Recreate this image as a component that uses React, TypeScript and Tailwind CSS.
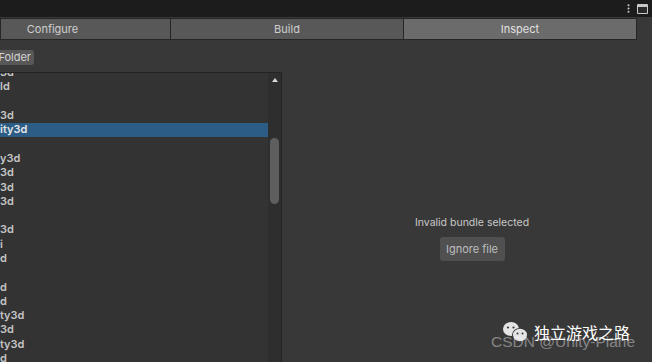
import { MoreVertical } from "lucide-react";

const rows = [
  "3d", "ld", "", "3d", "ity3d", "", "y3d", "3d", "3d", "3d", "", "3d", "i",
  "d", "", "d", "d", "ty3d", "3d", "ty3d", "d",
];
const selected = 4;

function Tab({ label, active, className }: { label: string; active?: boolean; className?: string }) {
  return (
    <div
      className={`flex h-[22px] items-center justify-center border border-[#262626] text-[11px] ${
        active ? "bg-[#6b6b6b] text-[#e0e0e0]" : "bg-[#585858] text-[#cfcfcf]"
      } ${className ?? ""}`}
    >
      {label}
    </div>
  );
}

function WeChatMark() {
  return (
    <svg width="28" height="22" viewBox="0 0 28 22">
      <ellipse cx="9" cy="8" rx="8" ry="7" fill="#e4e4e4" />
      <circle cx="6" cy="6.5" r="1.1" fill="#383838" />
      <circle cx="11.5" cy="6.5" r="1.1" fill="#383838" />
      <ellipse cx="18" cy="14" rx="8" ry="7" fill="#383838" />
      <ellipse cx="18" cy="14" rx="7" ry="6.2" fill="#e4e4e4" />
      <circle cx="15.5" cy="12.5" r="1" fill="#383838" />
      <circle cx="20.5" cy="12.5" r="1" fill="#383838" />
    </svg>
  );
}

export default function App() {
  return (
    <div
      className="relative flex h-[362px] w-[652px] flex-col overflow-hidden bg-[#383838]"
      style={{ fontFamily: "Inter, 'Noto Sans', sans-serif" }}
    >
      {/* title strip */}
      <div className="flex h-[17px] items-center justify-end gap-[3px] bg-[#1c1c1c] pr-[4px]">
        <MoreVertical className="h-[11px] w-[11px] text-[#c8c8c8]" strokeWidth={2.5} />
        <div className="h-[10px] w-[11px] rounded-[1px] border border-t-[3px] border-[#c8c8c8] bg-[#2a2a2a]" />
      </div>

      {/* tabs */}
      <div className="flex pt-px pr-[14px]">
        <Tab label="Configure" className="w-[171px] pr-[66px]" />
        <Tab label="Build" className="w-[234px] -ml-px" />
        <Tab label="Inspect" active className="w-[234px] -ml-px" />
      </div>

      <div className="flex min-h-0 flex-1">
        {/* left column */}
        <div className="flex w-[282px] flex-col">
          <div className="pt-[10px] pb-[7px]">
            <div className="flex h-[15px] w-[34px] items-center justify-end rounded-r-[3px] bg-[#585858] pr-[3px] text-[11px] text-[#d4d4d4]">
              Folder
            </div>
          </div>
          <div className="flex min-h-0 flex-1 border-t border-r border-[#232323] bg-[#333333]">
            <div className="min-w-0 flex-1 overflow-hidden">
              <div className="-mt-[7.5px]">
                {rows.map((r, i) => (
                  <div
                    key={i}
                    className={`flex h-[14.3px] items-center whitespace-nowrap text-[11px] font-semibold leading-none ${
                      i === selected ? "bg-[#2c5d87] text-[#e6e6e6]" : "text-[#c4c4c4]"
                    }`}
                  >
                    {r}
                  </div>
                ))}
              </div>
            </div>
            {/* scrollbar */}
            <div className="flex w-[13px] flex-col items-center bg-[#2e2e2e] pt-[5px]">
              <div className="h-0 w-0 border-x-[3px] border-b-[4px] border-x-transparent border-b-[#d8d8d8]" />
              <div className="mt-[56px] h-[66px] w-[9px] rounded-full bg-[#5e5e5e]" />
            </div>
          </div>
        </div>

        {/* inspector */}
        <div className="flex flex-1 flex-col items-center justify-center pl-[10px] pt-[74px]">
          <div className="text-[10.5px] text-[#c8c8c8]">Invalid bundle selected</div>
          <div className="mt-[6px] flex h-[24px] w-[65px] items-center justify-center rounded-[3px] bg-[#505050] text-[11px] text-[#bdbdbd]">
            Ignore file
          </div>
        </div>
      </div>

      {/* watermark */}
      <div className="absolute left-[502px] top-[321px] flex items-center gap-[4px]">
        <WeChatMark />
        <span className="text-[16px] leading-none text-white" style={{ fontFamily: "'Noto Sans CJK SC', sans-serif" }}>
          独立游戏之路
        </span>
      </div>
      <div
        className="absolute left-[491px] top-[334px] text-[15.5px] leading-none text-white/40"
        style={{ fontFamily: "'Liberation Sans', Arial, sans-serif" }}
      >
        CSDN @Unity-Plane
      </div>
    </div>
  );
}
